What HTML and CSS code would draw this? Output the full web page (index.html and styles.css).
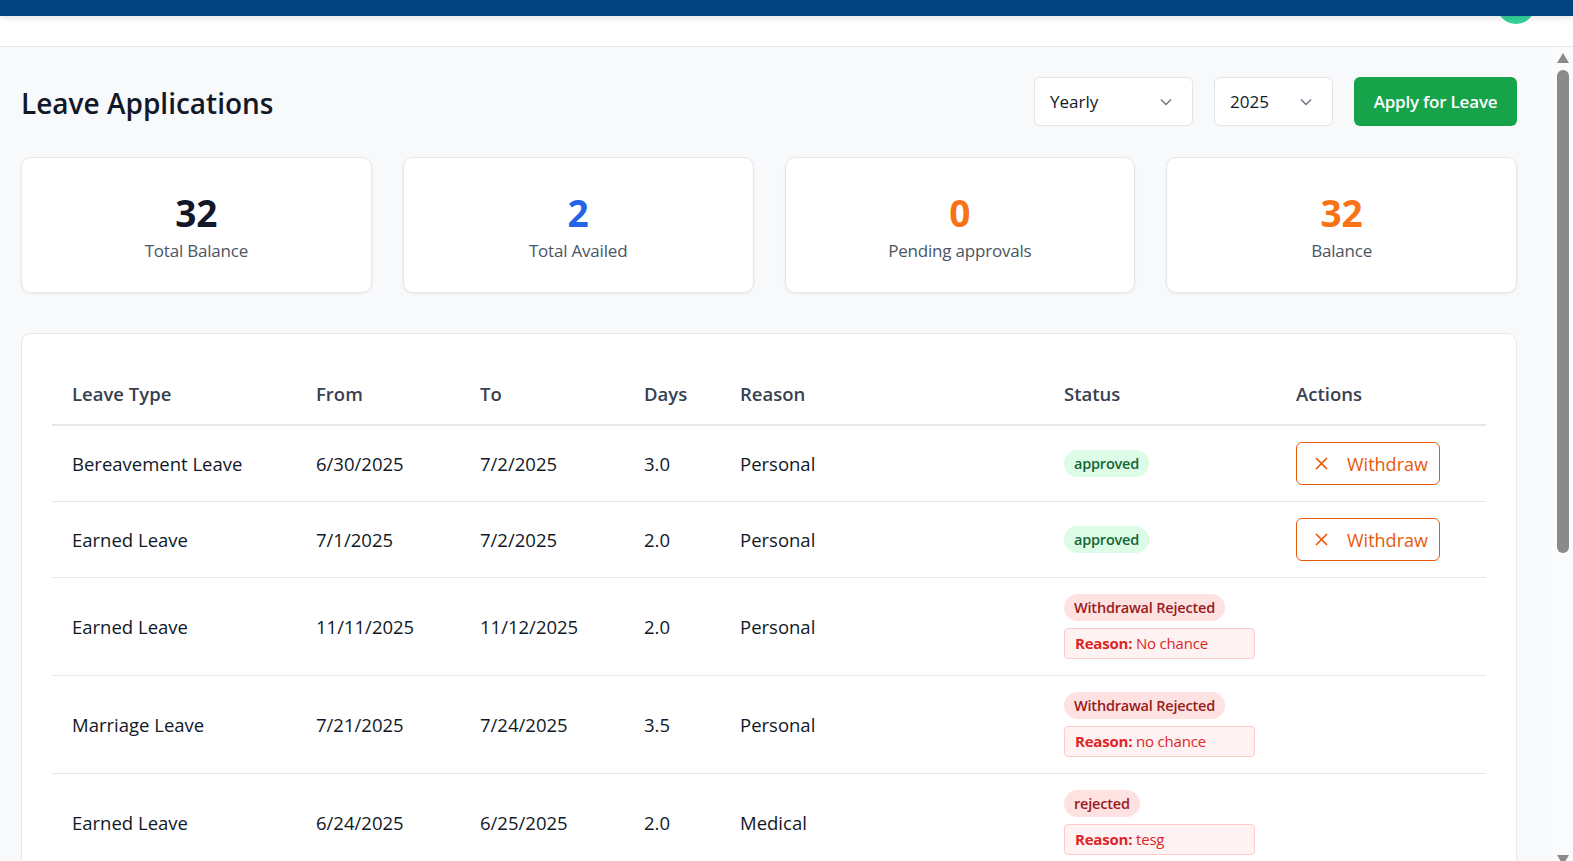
FILE: index.html
```html
<!DOCTYPE html>
<html lang="en">
<head>
<meta charset="utf-8">
<title>Leave Applications</title>
<link rel="stylesheet" href="styles.css">
</head>
<body>
<header class="topbar">
  <div class="topbar-blue"></div>
  <div class="topbar-white">
    <span class="avatar"></span>
  </div>
</header>
<div class="layout">
<main class="main">
  <div class="page-head">
    <h1 class="page-title">Leave Applications</h1>
    <div class="head-controls">
      <div class="select select-period">
        <span>Yearly</span>
        <svg class="chev" width="12" height="8" viewBox="0 0 12 8"><path d="M1 1.5l5 5 5-5" fill="none" stroke="#6b7280" stroke-width="1.4"/></svg>
      </div>
      <div class="select select-year">
        <span>2025</span>
        <svg class="chev" width="12" height="8" viewBox="0 0 12 8"><path d="M1 1.5l5 5 5-5" fill="none" stroke="#6b7280" stroke-width="1.4"/></svg>
      </div>
      <button class="btn-apply">Apply for Leave</button>
    </div>
  </div>

  <section class="stats">
    <div class="stat-card"><div class="stat-num num-dark">32</div><div class="stat-label">Total Balance</div></div>
    <div class="stat-card"><div class="stat-num num-blue">2</div><div class="stat-label">Total Availed</div></div>
    <div class="stat-card"><div class="stat-num num-orange">0</div><div class="stat-label">Pending approvals</div></div>
    <div class="stat-card"><div class="stat-num num-orange">32</div><div class="stat-label">Balance</div></div>
  </section>

  <section class="table-card">
    <table class="leave-table">
      <colgroup>
        <col class="c-type"><col class="c-from"><col class="c-to"><col class="c-days"><col class="c-reason"><col class="c-status"><col class="c-actions">
      </colgroup>
      <thead>
        <tr><th>Leave Type</th><th>From</th><th>To</th><th>Days</th><th>Reason</th><th>Status</th><th>Actions</th></tr>
      </thead>
      <tbody>
        <tr>
          <td>Bereavement Leave</td><td>6/30/2025</td><td>7/2/2025</td><td>3.0</td><td>Personal</td>
          <td><span class="badge badge-green">approved</span></td>
          <td><button class="btn-withdraw"><svg width="13" height="13" viewBox="0 0 13 13"><path d="M1 1l11 11M12 1L1 12" stroke="#ea580c" stroke-width="1.7" fill="none"/></svg><span>Withdraw</span></button></td>
        </tr>
        <tr>
          <td>Earned Leave</td><td>7/1/2025</td><td>7/2/2025</td><td>2.0</td><td>Personal</td>
          <td><span class="badge badge-green">approved</span></td>
          <td><button class="btn-withdraw"><svg width="13" height="13" viewBox="0 0 13 13"><path d="M1 1l11 11M12 1L1 12" stroke="#ea580c" stroke-width="1.7" fill="none"/></svg><span>Withdraw</span></button></td>
        </tr>
        <tr>
          <td>Earned Leave</td><td>11/11/2025</td><td>11/12/2025</td><td>2.0</td><td>Personal</td>
          <td><div class="status-stack"><span class="badge badge-red">Withdrawal Rejected</span><div class="reason-box"><b>Reason:</b> No chance</div></div></td>
          <td></td>
        </tr>
        <tr>
          <td>Marriage Leave</td><td>7/21/2025</td><td>7/24/2025</td><td>3.5</td><td>Personal</td>
          <td><div class="status-stack"><span class="badge badge-red">Withdrawal Rejected</span><div class="reason-box"><b>Reason:</b> no chance</div></div></td>
          <td></td>
        </tr>
        <tr>
          <td>Earned Leave</td><td>6/24/2025</td><td>6/25/2025</td><td>2.0</td><td>Medical</td>
          <td><div class="status-stack"><span class="badge badge-red">rejected</span><div class="reason-box"><b>Reason:</b> tesg</div></div></td>
          <td></td>
        </tr>
      </tbody>
    </table>
  </section>
</main>
<div class="scrollbar" aria-hidden="true">
  <span class="sb-up"></span>
  <span class="sb-thumb"></span>
  <span class="sb-down"></span>
</div>
</div>
</body>
</html>
```

FILE: styles.css
```css
* { box-sizing: border-box; }
html, body { margin: 0; padding: 0; height: 100%; overflow: hidden; }
body {
  font-family: "Open Sans", "Noto Sans", sans-serif;
  color: #111827;
  background: #ffffff;
}

.topbar { position: relative; }
.topbar-blue {
  position: relative;
  z-index: 2;
  height: 16px;
  background: #014281;
  box-shadow: 0 2px 6px rgba(0,0,0,0.12);
}
.topbar-white {
  position: relative;
  z-index: 1;
  height: 31px;
  background: #ffffff;
  border-bottom: 1px solid #e5e7eb;
}
.avatar {
  position: absolute;
  right: 38px;
  top: -30px;
  width: 38px;
  height: 38px;
  border-radius: 50%;
  background: #34d399;
}

.layout {
  display: flex;
  height: calc(100vh - 47px);
  overflow: hidden;
}
.main {
  flex: 1;
  min-width: 0;
  overflow: hidden;
  background: #f8f9fb;
  padding: 30px 35px 40px 21px;
}
.scrollbar {
  width: 21px;
  flex-shrink: 0;
  background: #fafbfc;
  display: flex;
  flex-direction: column;
  align-items: center;
  overflow: hidden;
}
.sb-up {
  margin-top: 6px;
  width: 0;
  height: 0;
  border-left: 6px solid transparent;
  border-right: 6px solid transparent;
  border-bottom: 10px solid #8a8a8a;
}
.sb-thumb {
  margin-top: 7px;
  width: 12px;
  height: 483px;
  border-radius: 6px;
  background: #8a8a8a;
}
.sb-down {
  margin-top: auto;
  margin-bottom: -4px;
  width: 0;
  height: 0;
  border-left: 6px solid transparent;
  border-right: 6px solid transparent;
  border-top: 10px solid #8a8a8a;
}

.page-head {
  display: flex;
  align-items: center;
  justify-content: space-between;
  height: 49px;
}
.page-title {
  margin: 2px 0 0 0;
  font-size: 28px;
  font-weight: 600;
  color: #111827;
}
.head-controls { display: flex; gap: 21px; align-items: center; }
.select {
  display: flex;
  align-items: center;
  justify-content: space-between;
  height: 49px;
  padding: 0 20px 0 15px;
  background: #ffffff;
  border: 1px solid #e2e4e8;
  border-radius: 6px;
  font-size: 17px;
  color: #111827;
}
.select-period { width: 159px; }
.select-year { width: 119px; }
.chev { display: block; }
.btn-apply {
  height: 49px;
  width: 163px;
  border: none;
  border-radius: 6px;
  background: #16a34a;
  color: #ffffff;
  font-family: inherit;
  font-size: 17px;
  font-weight: 600;
  letter-spacing: -0.2px;
}

.stats {
  display: grid;
  grid-template-columns: repeat(4, 1fr);
  gap: 31px;
  margin-top: 31px;
}
.stat-card {
  background: #ffffff;
  border: 1px solid #e5e7eb;
  border-radius: 10px;
  box-shadow: 0 1px 3px rgba(0,0,0,0.06);
  height: 136px;
  display: flex;
  flex-direction: column;
  align-items: center;
  justify-content: center;
}
.stat-num {
  font-size: 37px;
  font-weight: 700;
  line-height: 46px;
  margin-top: 2px;
}
.num-dark { color: #111827; }
.num-blue { color: #2563eb; }
.num-orange { color: #f97316; }
.stat-label {
  font-size: 17px;
  color: #4b5563;
  line-height: 24px;
  margin-top: 3px;
  letter-spacing: -0.2px;
}

.table-card {
  margin-top: 40px;
  background: #ffffff;
  border: 1px solid #e5e7eb;
  border-radius: 10px;
  padding: 30px;
}
.leave-table {
  width: 100%;
  border-collapse: collapse;
  table-layout: fixed;
}
.c-type { width: 244px; }
.c-from { width: 164px; }
.c-to { width: 164px; }
.c-days { width: 96px; }
.c-reason { width: 324px; }
.c-status { width: 232px; }
.leave-table th {
  text-align: left;
  font-size: 18.5px;
  font-weight: 600;
  color: #374151;
  padding: 16px 20px;
  height: 61px;
  line-height: 24px;
  border-bottom: 2px solid #e5e7eb;
}
.leave-table td {
  font-size: 18.5px;
  line-height: 24px;
  color: #111827;
  padding: 16px 20px;
  height: 75px;
  border-bottom: 1px solid #e5e7eb;
  vertical-align: middle;
}

.badge {
  display: inline-block;
  padding: 4px 10px;
  border-radius: 999px;
  font-size: 14.5px;
  font-weight: 600;
  line-height: 19px;
  letter-spacing: -0.2px;
}
.badge-green { background: #dcfce7; color: #166534; }
.badge-red { background: #fee2e2; color: #991b1b; }
.status-stack {
  display: flex;
  flex-direction: column;
  align-items: flex-start;
  gap: 7px;
}
.reason-box {
  width: 191px;
  padding: 5px 10px;
  background: #fef2f2;
  border: 1px solid #fecaca;
  border-radius: 4px;
  font-size: 15px;
  line-height: 19px;
  color: #dc2626;
  letter-spacing: -0.2px;
}
.reason-box b { font-weight: 700; }

.btn-withdraw {
  display: inline-flex;
  align-items: center;
  gap: 19px;
  height: 43px;
  width: 144px;
  padding: 0 18px;
  background: #ffffff;
  border: 1px solid #ea580c;
  border-radius: 6px;
  color: #ea580c;
  font-family: inherit;
  font-size: 18px;
  line-height: 24px;
  font-weight: 500;
}
.btn-withdraw svg { display: block; flex-shrink: 0; width: 13px; height: 13px; }
```
